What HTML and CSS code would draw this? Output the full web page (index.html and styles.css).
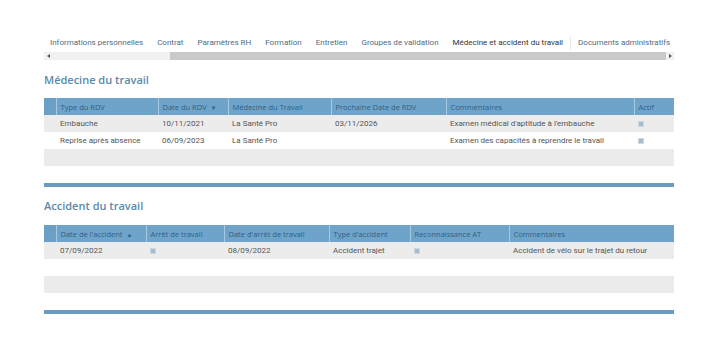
FILE: index.html
```html
<!DOCTYPE html>
<html lang="fr">
<head>
<meta charset="utf-8">
<link rel="stylesheet" href="styles.css">
</head>
<body>
<div class="page">
  <div class="tabs">
    <span class="tab">Informations personnelles</span>
    <span class="tab">Contrat</span>
    <span class="tab">Paramètres RH</span>
    <span class="tab">Formation</span>
    <span class="tab">Entretien</span>
    <span class="tab">Groupes de validation</span>
    <span class="tab active">Médecine et accident du travail</span>
    <span class="tab">Documents administratifs</span>
  </div>
  <div class="scrollbar">
    <span class="arrow left"></span>
    <div class="track"><div class="thumb"></div></div>
    <span class="arrow right"></span>
  </div>

  <h2 class="title t1">Médecine du travail</h2>
  <table class="grid g1">
    <colgroup>
      <col style="width:12px"><col style="width:102px"><col style="width:70px"><col style="width:103px"><col style="width:115px"><col style="width:188px"><col style="width:40px">
    </colgroup>
    <thead>
      <tr><th></th><th>Type du RDV</th><th>Date du RDV <span class="sort">▼</span></th><th>Médecine du Travail</th><th>Prochaine Date de RDV</th><th>Commentaires</th><th>Actif</th></tr>
    </thead>
    <tbody>
      <tr class="alt"><td></td><td>Embauche</td><td>10/11/2021</td><td>La Santé Pro</td><td>03/11/2026</td><td>Examen médical d'aptitude à l'embauche</td><td><span class="chk"></span></td></tr>
      <tr><td></td><td>Reprise après absence</td><td>06/09/2023</td><td>La Santé Pro</td><td></td><td>Examen des capacités à reprendre le travail</td><td><span class="chk"></span></td></tr>
    </tbody>
  </table>
  <div class="footer-row f1"></div>
  <div class="rule r1"></div>

  <h2 class="title t2">Accident du travail</h2>
  <table class="grid g2">
    <colgroup>
      <col style="width:12px"><col style="width:90px"><col style="width:78px"><col style="width:105px"><col style="width:81px"><col style="width:99px"><col style="width:165px">
    </colgroup>
    <thead>
      <tr><th></th><th>Date de l'accident <span class="sort">▲</span></th><th>Arrêt de travail</th><th>Date d'arrêt de travail</th><th>Type d'accident</th><th>Reconnaissance AT</th><th>Commentaires</th></tr>
    </thead>
    <tbody>
      <tr class="alt"><td></td><td>07/09/2022</td><td><span class="chk"></span></td><td>08/09/2022</td><td>Accident trajet</td><td><span class="chk"></span></td><td>Accident de vélo sur le trajet du retour</td></tr>
    </tbody>
  </table>
  <div class="footer-row f2"></div>
  <div class="rule r2"></div>
</div>
</body>
</html>
```

FILE: styles.css
```css
html, body {
  margin: 0;
  padding: 0;
  background: #ffffff;
}
body {
  font-family: Roboto, "Noto Sans", sans-serif;
  font-size: 8px;
  color: #555555;
}
.page {
  width: 630px;
  padding: 36px 0 0 44px;
}
.tabs {
  display: flex;
  align-items: center;
  height: 14px;
  padding-left: 6px;
  white-space: nowrap;
}
.tab {
  color: #4f6b82;
  font-size: 8px;
  margin-right: 14px;
  line-height: 14px;
}
.tab.active {
  color: #333333;
  padding-right: 7px;
  margin-right: 7px;
  border-right: 1px solid #e8e8e8;
}
.scrollbar {
  display: flex;
  align-items: center;
  height: 8px;
  margin-top: 2px;
  background: #f1f1f1;
}
.arrow {
  width: 8px;
  height: 8px;
  display: flex;
  align-items: center;
  justify-content: center;
  flex: none;
}
.arrow.left::before {
  content: "";
  border-top: 2px solid transparent;
  border-bottom: 2px solid transparent;
  border-right: 3px solid #555;
}
.arrow.right::before {
  content: "";
  border-top: 2px solid transparent;
  border-bottom: 2px solid transparent;
  border-left: 3px solid #555;
}
.track {
  flex: 1;
  height: 8px;
  display: flex;
  padding-left: 118px;
}
.thumb {
  flex: 1;
  height: 8px;
  background: #c9c9c9;
}
.title {
  margin: 0;
  font-family: "Open Sans", sans-serif;
  font-weight: 600;
  font-size: 11px;
  color: #5b8aab;
  line-height: 16px;
}
.t1 { margin-top: 12px; }
.t2 { margin-top: 11px; }
.grid {
  border-collapse: collapse;
  table-layout: fixed;
  width: 630px;
}
.g1 { margin-top: 10px; }
.g2 { margin-top: 11px; }
.grid th {
  background: #6fa4ca;
  color: #2f5e83;
  font-family: "Open Sans", sans-serif;
  font-weight: 400;
  font-size: 7.5px;
  text-align: left;
  height: 17px;
  padding: 0 0 0 4px;
  border-left: 1px solid #a9c9e0;
  white-space: nowrap;
  overflow: hidden;
}
.grid th:first-child {
  border-left: none;
  background: #6a9fc6;
}
.sort {
  font-size: 6px;
  color: #2f5e83;
  margin-left: 2px;
}
.grid td {
  height: 17px;
  padding: 0 0 0 4px;
  white-space: nowrap;
  overflow: hidden;
  color: #555555;
}
.grid tr.alt td {
  background: #ececec;
}
.chk {
  display: inline-block;
  width: 4px;
  height: 4px;
  background: #a6bccd;
  border: 1px solid #ccd8e2;
  vertical-align: middle;
}
.footer-row {
  height: 17px;
  background: #ebebeb;
}
.f1 { margin-top: 0; }
.f2 { margin-top: 17px; }
.rule {
  height: 4px;
  background: #6b9bbf;
}
.r1 { margin-top: 17px; }
.r2 { margin-top: 17px; }
```
